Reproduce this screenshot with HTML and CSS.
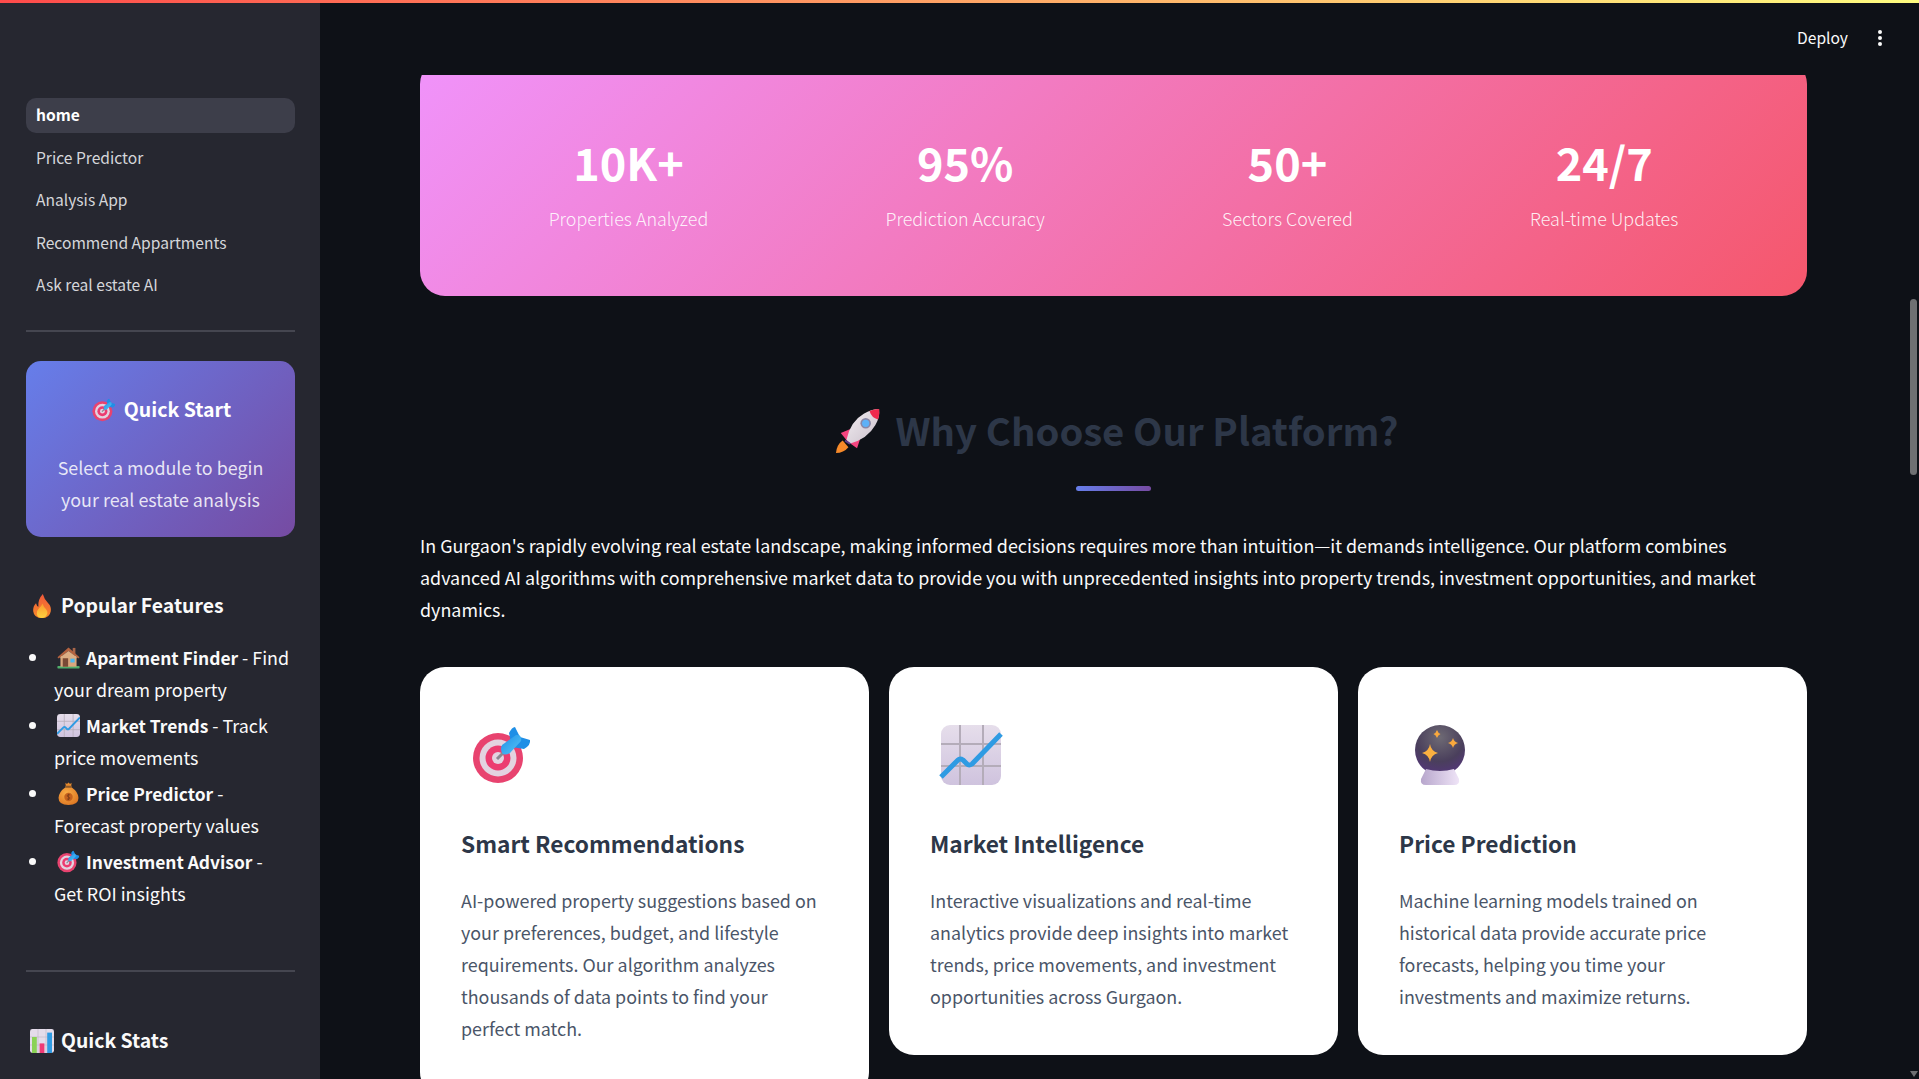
FILE: index.html
```html
<!DOCTYPE html>
<html lang="en">
<head>
  <meta charset="UTF-8">
  <title>Gurgaon Real Estate</title>
  <link rel="stylesheet" href="styles.css">
</head>
<body>
  <svg class="defs" width="0" height="0" aria-hidden="true">
    <defs>
      <linearGradient id="dartBlue" x1="0" y1="0" x2="1" y2="1"><stop offset="0" stop-color="#1f8fe6"/><stop offset="1" stop-color="#57c6f7"/></linearGradient>
      <linearGradient id="chartTile" x1="0" y1="0" x2="0" y2="1"><stop offset="0" stop-color="#e6deeb"/><stop offset="1" stop-color="#cfc3de"/></linearGradient>
      <radialGradient id="ballGlass" cx="0.5" cy="0.25" r="0.8"><stop offset="0" stop-color="#6e6a74"/><stop offset="0.6" stop-color="#4a3f5c"/><stop offset="1" stop-color="#55357e"/></radialGradient>
      <linearGradient id="ballBase" x1="0" y1="0" x2="1" y2="0"><stop offset="0" stop-color="#b7a6cc"/><stop offset="1" stop-color="#efe4f7"/></linearGradient>
      <linearGradient id="flame" x1="0" y1="0" x2="0" y2="1"><stop offset="0" stop-color="#f0583a"/><stop offset="1" stop-color="#f68a2a"/></linearGradient>
      <linearGradient id="flameIn" x1="0" y1="0" x2="0" y2="1"><stop offset="0" stop-color="#fb9b2e"/><stop offset="1" stop-color="#fdd13f"/></linearGradient>
      <linearGradient id="rocketBody" x1="0" y1="0" x2="1" y2="1"><stop offset="0" stop-color="#f3eef2"/><stop offset="1" stop-color="#c9bfca"/></linearGradient>
      <radialGradient id="bagFill" cx="0.4" cy="0.35" r="0.8"><stop offset="0" stop-color="#f9ad45"/><stop offset="1" stop-color="#d9701f"/></radialGradient>

      <symbol id="i-target" viewBox="0 0 60 60">
        <circle cx="26" cy="33" r="25" fill="#e8436f"/>
        <circle cx="26" cy="33" r="18.5" fill="#e3d3e0"/>
        <circle cx="26" cy="33" r="12.5" fill="#ec3c70"/>
        <circle cx="26" cy="33" r="6" fill="#e3d3e0"/>
        <path d="M25 34 L34 25" stroke="#8b8791" stroke-width="3"/>
        <path d="M37 8 Q40 2 43 2 L48 12 L58 15 Q59 20 52 24 L40 22 Z" fill="#1f8fe6"/>
        <path d="M30 20 L44 10 Q50 9 49 16 L38 28 Q32 31 30 28 Q28 24 30 20 Z" fill="url(#dartBlue)"/>
      </symbol>

      <symbol id="i-chart" viewBox="0 0 60 60">
        <rect x="0" y="0" width="60" height="60" rx="9" fill="url(#chartTile)"/>
        <path d="M19 0V60M42 0V60M0 19H60M0 41H60" stroke="#b4acb9" stroke-width="2"/>
        <path d="M0 52 L17 35 Q19 33 22 35 L26 39 Q28 41 31 39 L60 9" fill="none" stroke="#2f9be3" stroke-width="5"/>
      </symbol>

      <symbol id="i-ball" viewBox="0 0 52 60">
        <circle cx="26" cy="25" r="25" fill="url(#ballGlass)"/>
        <path d="M12 44 Q26 48 40 44 L45 54 Q46 60 40 60 H12 Q6 60 7 54 Z" fill="url(#ballBase)"/>
        <path d="M16 19 Q17 26 24 28 Q17 30 16 37 Q15 30 8 28 Q15 26 16 19 Z" fill="#fbb040"/>
        <path d="M39 13 Q40 17 44 18 Q40 19 39 23 Q38 19 34 18 Q38 17 39 13 Z" fill="#f9a83d"/>
        <path d="M23 5 Q24 8 26.5 9 Q24 10 23 13 Q22 10 19.5 9 Q22 8 23 5 Z" fill="#f9a83d"/>
      </symbol>

      <symbol id="i-rocket" viewBox="0 0 48 48">
        <path d="M8 34 Q2 38 1 47 Q9 47 14 41 Z" fill="#f68a2a"/>
        <path d="M6 26 L18 21 L14 36 Z" fill="#f4457f"/>
        <path d="M23 42 L27 30 L13 35 Z" fill="#f4457f"/>
        <path d="M12 33 Q16 14 30 6 Q38 1 46 1 Q47 10 42 18 Q34 32 16 37 Z" fill="url(#rocketBody)"/>
        <path d="M36 3 Q41 1 46 1 Q47 6 45 12 Q38 10 36 3 Z" fill="#ee2a4d"/>
        <path d="M11 33 L17 37 L15 38 L10 35 Z" fill="#5d3f8c"/>
        <circle cx="32" cy="16" r="5.5" fill="#8a87a6"/>
        <circle cx="32" cy="16" r="3.8" fill="#5eb1f7"/>
      </symbol>

      <symbol id="i-fire" viewBox="0 0 48 60">
        <path d="M26 0 Q30 14 38 21 Q48 31 46 43 Q43 60 24 60 Q4 60 2 43 Q1 31 9 23 Q11 31 15 32 Q13 14 26 0 Z" fill="url(#flame)"/>
        <path d="M25 24 Q28 33 34 38 Q40 45 36 52 Q32 60 24 60 Q13 60 11 50 Q10 42 17 35 Q23 31 25 24 Z" fill="url(#flameIn)"/>
      </symbol>

      <symbol id="i-house" viewBox="0 0 60 60">
        <rect x="1" y="52" width="58" height="7" rx="2" fill="#4fae6a"/>
        <rect x="9" y="26" width="42" height="28" fill="#d9a77d"/>
        <rect x="41" y="5" width="7" height="16" fill="#a8664a"/>
        <path d="M30 4 L58 29 Q59 33 55 32 L30 13 L5 32 Q1 33 2 29 Z" fill="#b4623f"/>
        <path d="M30 13 L51 29 V32 H9 V29 Z" fill="#dcae85"/>
        <rect x="15" y="32" width="14" height="22" fill="#7a4a35"/>
        <rect x="35" y="33" width="11" height="10" fill="#4bb8ef"/>
      </symbol>

      <symbol id="i-bag" viewBox="0 0 52 60">
        <path d="M18 2 L22 5 L26 1 L30 5 L34 2 L33 12 H19 Z" fill="#e68a2c"/>
        <path d="M19 13 H33 Q52 26 52 42 Q52 60 26 60 Q0 60 0 42 Q0 26 19 13 Z" fill="url(#bagFill)"/>
        <rect x="17" y="10" width="18" height="5" rx="2.5" fill="#8e5a2a"/>
        <circle cx="26" cy="39" r="11" fill="#c4621e"/>
        <path d="M30 34 Q26 31 23 34 Q21 38 26 39 Q31 40 29 44 Q26 47 22 44 M26 31V47" fill="none" stroke="#7b3b18" stroke-width="2"/>
      </symbol>

      <symbol id="i-bars" viewBox="0 0 60 60">
        <rect x="0" y="0" width="60" height="60" rx="6" fill="#e4dcea"/>
        <path d="M20 0V60M40 0V60M0 20H60M0 40H60" stroke="#bdb5c3" stroke-width="1.5"/>
        <rect x="5" y="20" width="12" height="40" fill="#8ad255"/>
        <rect x="24" y="36" width="12" height="24" fill="#ef3a75"/>
        <rect x="43" y="9" width="12" height="51" fill="#2f9be3"/>
      </symbol>
    </defs>
  </svg>

  <div class="decoration"></div>

  <div class="app">
    <aside class="sidebar">
      <nav class="nav">
        <a class="nav-item active">home</a>
        <a class="nav-item">Price Predictor</a>
        <a class="nav-item">Analysis App</a>
        <a class="nav-item">Recommend Appartments</a>
        <a class="nav-item">Ask real estate AI</a>
      </nav>
      <hr class="side-rule first-rule">

      <div class="quick-card">
        <h3><svg class="emoji"><use href="#i-target"/></svg>Quick Start</h3>
        <p>Select a module to begin your real estate analysis</p>
      </div>

      <h4 class="side-head"><svg class="emoji"><use href="#i-fire"/></svg>Popular Features</h4>
      <ul class="feature-list">
        <li><svg class="emoji"><use href="#i-house"/></svg><b>Apartment Finder</b> - Find your dream property</li>
        <li><svg class="emoji"><use href="#i-chart"/></svg><b>Market Trends</b> - Track price movements</li>
        <li><svg class="emoji"><use href="#i-bag"/></svg><b>Price Predictor</b> - Forecast property values</li>
        <li><svg class="emoji"><use href="#i-target"/></svg><b>Investment Advisor</b> - Get ROI insights</li>
      </ul>
      <hr class="side-rule second-rule">

      <h4 class="side-head stats-head"><svg class="emoji"><use href="#i-bars"/></svg>Quick Stats</h4>
    </aside>

    <main class="main">
      <header class="topbar">
        <span class="deploy">Deploy</span>
        <span class="kebab"><i></i><i></i><i></i></span>
      </header>

      <div class="content">
        <section class="stats">
          <div class="stat"><strong>10K+</strong><span>Properties Analyzed</span></div>
          <div class="stat"><strong>95%</strong><span>Prediction Accuracy</span></div>
          <div class="stat"><strong>50+</strong><span>Sectors Covered</span></div>
          <div class="stat"><strong>24/7</strong><span>Real-time Updates</span></div>
        </section>

        <h2 class="section-title"><svg class="title-emoji"><use href="#i-rocket"/></svg>Why Choose Our Platform?</h2>
        <div class="title-bar"></div>

        <p class="intro">In Gurgaon's rapidly evolving real estate landscape, making informed decisions requires more than intuition—it demands intelligence. Our platform combines advanced AI algorithms with comprehensive market data to provide you with unprecedented insights into property trends, investment opportunities, and market dynamics.</p>

        <section class="cards">
          <article class="card">
            <svg class="card-icon"><use href="#i-target"/></svg>
            <h3>Smart Recommendations</h3>
            <p>AI-powered property suggestions based on your preferences, budget, and lifestyle requirements. Our algorithm analyzes thousands of data points to find your perfect match.</p>
          </article>
          <article class="card">
            <svg class="card-icon"><use href="#i-chart"/></svg>
            <h3>Market Intelligence</h3>
            <p>Interactive visualizations and real-time analytics provide deep insights into market trends, price movements, and investment opportunities across Gurgaon.</p>
          </article>
          <article class="card">
            <svg class="card-icon"><use href="#i-ball"/></svg>
            <h3>Price Prediction</h3>
            <p>Machine learning models trained on historical data provide accurate price forecasts, helping you time your investments and maximize returns.</p>
          </article>
        </section>
      </div>

      <div class="scroll-thumb"></div>
      <div class="scroll-arrow"></div>
    </main>
  </div>
</body>
</html>
```

FILE: styles.css
```css
* {
  box-sizing: border-box;
}

html, body {
  height: 100%;
  margin: 0;
  overflow: hidden;
}

body {
  font-family: "Noto Sans CJK SC", "Source Sans Pro", "Noto Sans", sans-serif;
  font-size: 17.9px;
  line-height: 32px;
  color: #fafafa;
  background: #0e1117;
}

.defs {
  position: absolute;
}

.decoration {
  height: 3px;
  background: linear-gradient(90deg, #ff4b4b, #fffd80);
}

.app {
  display: flex;
  height: 1076px;
}

/* sidebar */
.sidebar {
  width: 320px;
  flex: none;
  padding: 95px 25px 0 26px;
  background: #262730;
  overflow: hidden;
}

.nav {
  display: flex;
  flex-direction: column;
  gap: 7.5px;
}

.nav-item {
  height: 35px;
  padding: 0 10px;
  border-radius: 10px;
  font-size: 15.6px;
  line-height: 33px;
  color: #d5d6da;
}

.nav-item.active {
  background: #3d3e4a;
  color: #fff;
  font-weight: 600;
}

.side-rule {
  height: 2px;
  margin: 0;
  border: 0;
  background: #454650;
}

.first-rule {
  margin-top: 27px;
}

.second-rule {
  margin-top: 61px;
}

.quick-card {
  height: 176px;
  margin-top: 29px;
  padding: 32px 20px 0;
  border-radius: 15px;
  text-align: center;
  background: linear-gradient(135deg, #667eea, #764ba2);
}

.quick-card h3 {
  margin: 0 0 26px;
  font-size: 19.5px;
  line-height: 32px;
  font-weight: 600;
  color: #fff;
}

.quick-card p {
  margin: 0;
  color: rgba(255, 255, 255, 0.85);
}

.emoji {
  width: 24px;
  height: 24px;
  margin-right: 7px;
  vertical-align: -5px;
}

.quick-card .emoji {
  margin: 0 8px 0 2px;
}

.side-head {
  margin: 52px 0 0;
  padding-left: 4px;
  font-size: 19.4px;
  line-height: 32px;
  font-weight: 600;
  color: #fafafa;
}

.stats-head {
  margin-top: 52px;
}

.feature-list {
  margin: 20px 0 0;
  padding: 0 0 0 28px;
  list-style: none;
}

.feature-list li {
  position: relative;
  margin-bottom: 4px;
}

.feature-list li::before {
  content: "";
  position: absolute;
  left: -25px;
  top: 13px;
  width: 7px;
  height: 7px;
  border-radius: 50%;
  background: #fafafa;
}

.feature-list b {
  font-size: 17.4px;
  line-height: 1;
  font-weight: 600;
}

.feature-list .emoji {
  width: 23px;
  height: 23px;
  margin: 0 6px 0 3px;
  vertical-align: -4px;
}

/* main */
.main {
  position: relative;
  flex: 1;
  min-width: 0;
  overflow: hidden;
}

.topbar {
  position: absolute;
  top: 0;
  left: 0;
  right: 0;
  height: 72px;
  display: flex;
  align-items: center;
  justify-content: flex-end;
  gap: 30px;
  padding: 0 37px 2px 0;
  background: #0e1117;
  z-index: 2;
}

.deploy {
  margin-bottom: 2px;
  font-size: 15.6px;
  color: #fafafa;
}

.kebab {
  display: flex;
  flex-direction: column;
  gap: 2px;
}

.kebab i {
  width: 4px;
  height: 4px;
  border-radius: 50%;
  background: #fafafa;
}

.content {
  padding: 56px 112px 0 100px;
}

.stats {
  display: flex;
  justify-content: space-around;
  height: 237px;
  padding: 68px 40px 0;
  border-radius: 25px;
  background: linear-gradient(135deg, #f093fb, #f5576c);
}

.stat {
  display: flex;
  flex-direction: column;
  align-items: center;
}

.stat strong {
  font-size: 45px;
  line-height: 70px;
  font-weight: 700;
  color: #fff;
}

.stat span {
  margin-top: 5px;
  font-size: 17.9px;
  line-height: 32px;
  font-weight: 300;
  color: rgba(255, 255, 255, 0.9);
}

.section-title {
  margin: 99px 0 0;
  height: 70px;
  padding-left: 6px;
  text-align: center;
  font-size: 38.3px;
  line-height: 70px;
  font-weight: 600;
  color: #2d3748;
}

.title-emoji {
  width: 46px;
  height: 46px;
  margin-right: 15px;
  vertical-align: -8px;
}

.title-bar {
  width: 75px;
  height: 5px;
  margin: 21px auto 0;
  border-radius: 3px;
  background: linear-gradient(90deg, #667eea, #764ba2);
}

.intro {
  margin: 38px 0 0;
}

.cards {
  display: grid;
  grid-template-columns: repeat(3, 1fr);
  gap: 20px;
  align-items: start;
  margin-top: 42px;
}

.card {
  height: 388px;
  padding: 58px 41px 0;
  border-radius: 25px;
  background: #fff;
  color: #4a5568;
}

.card:first-child {
  height: 430px;
}

.card-icon {
  display: block;
  width: 82px;
  height: 60px;
}

.card h3 {
  margin: 38.5px 0 20px;
  font-size: 22.7px;
  line-height: 40px;
  font-weight: 600;
  color: #2d3748;
}

.card p {
  margin: 0;
}

/* fake browser scrollbar */
.scroll-thumb {
  position: absolute;
  top: 296px;
  right: 2px;
  width: 7px;
  height: 176px;
  border-radius: 4px;
  background: #6f7072;
}

.scroll-arrow {
  position: absolute;
  right: 1px;
  bottom: 2px;
  width: 0;
  height: 0;
  border-left: 4.5px solid transparent;
  border-right: 4.5px solid transparent;
  border-top: 6px solid #6f7072;
}
```
